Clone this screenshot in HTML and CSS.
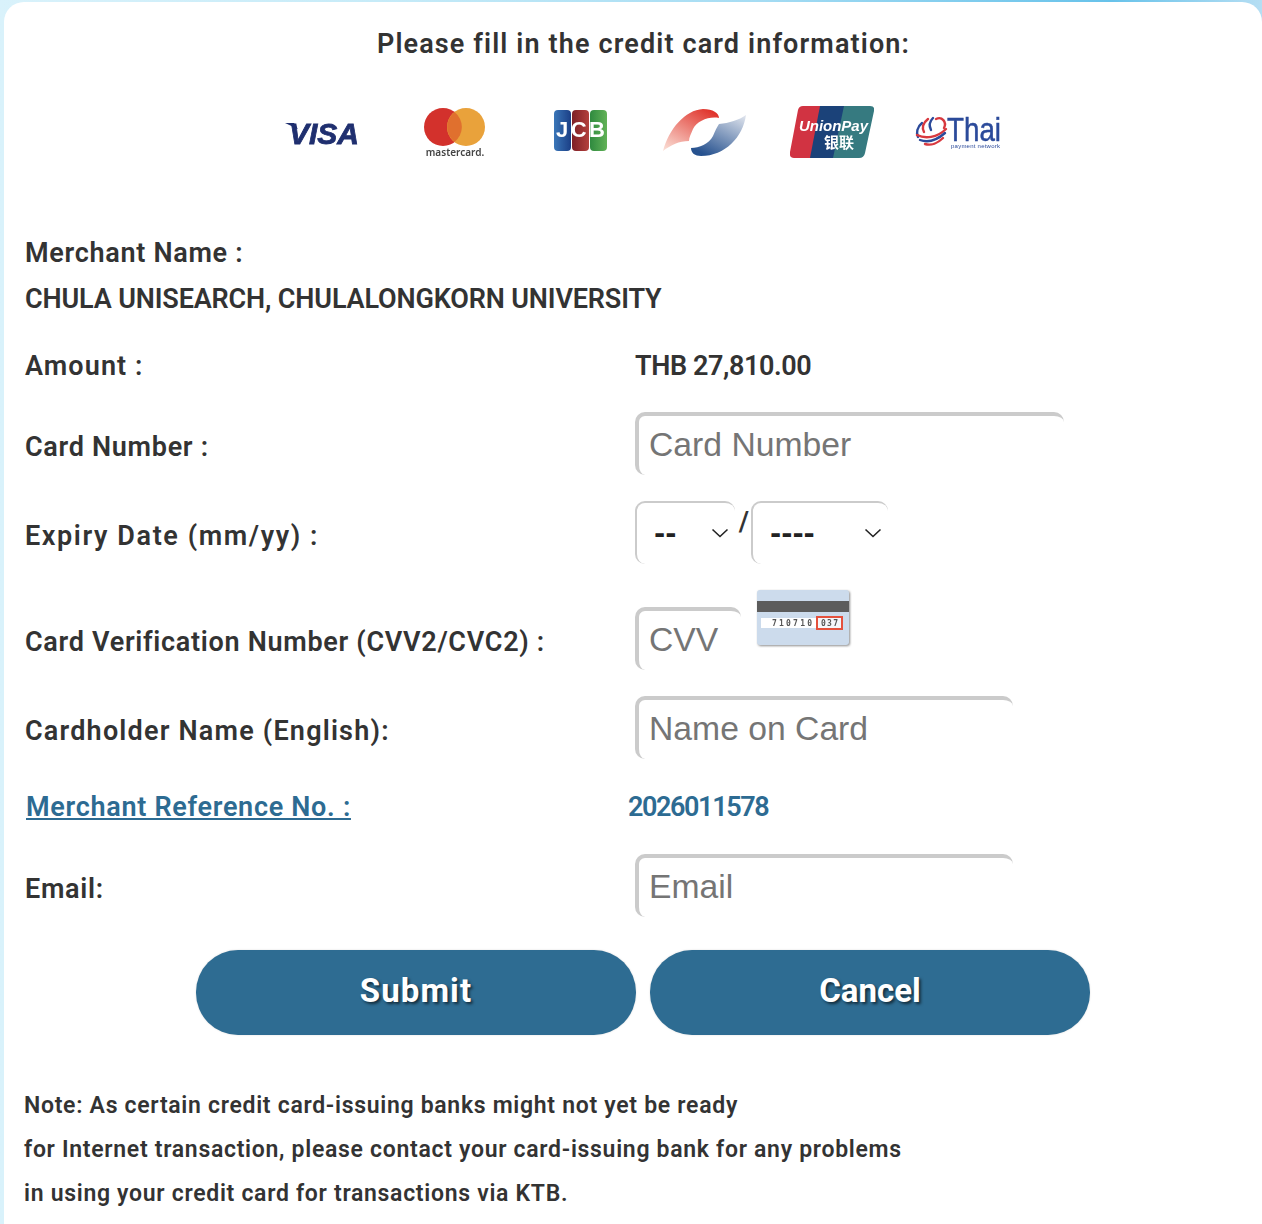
FILE: index.html
```html
<!DOCTYPE html>
<html lang="en">
<head>
    <meta charset="UTF-8">
    <title>Credit Card Payment</title>
    <link rel="stylesheet" href="styles.css">
</head>
<body>
    <main class="card">
        <h1 class="title">Please fill in the credit card information:</h1>

        <div class="logos">
            <svg class="logo" width="84" height="30" viewBox="0 0 84 30">
                <path d="M0 6 H9 L13 12 Z" fill="#1f2f6f"/>
                <text x="4" y="27" textLength="70" lengthAdjust="spacingAndGlyphs" class="visa-text">VISA</text>
            </svg>
            <svg class="logo logo-mc" width="66" height="56" viewBox="0 0 66 56">
                <circle cx="19" cy="22" r="19" fill="#d3312c"/>
                <circle cx="42" cy="22" r="19" fill="#e9a23b"/>
                <path d="M30.5 7 a19 19 0 0 1 0 30 a19 19 0 0 1 0 -30 Z" fill="#e0702e"/>
                <text x="31" y="51" text-anchor="middle" class="mc-text">mastercard.</text>
            </svg>
            <svg class="logo" width="56" height="44" viewBox="0 0 56 44">
                <defs>
                    <linearGradient id="jcbBlue" x1="0" y1="0" x2="1" y2="0">
                        <stop offset="0" stop-color="#3a76b8"/>
                        <stop offset="1" stop-color="#1b3f86"/>
                    </linearGradient>
                    <linearGradient id="jcbRed" x1="0" y1="0" x2="1" y2="0">
                        <stop offset="0" stop-color="#7d1f26"/>
                        <stop offset="1" stop-color="#b4403c"/>
                    </linearGradient>
                    <linearGradient id="jcbGreen" x1="0" y1="0" x2="1" y2="0">
                        <stop offset="0" stop-color="#2f8a3f"/>
                        <stop offset="1" stop-color="#62b257"/>
                    </linearGradient>
                </defs>
                <rect x="1" y="0" width="17" height="41" rx="4" fill="url(#jcbBlue)"/>
                <rect x="19" y="0" width="17" height="41" rx="4" fill="url(#jcbRed)"/>
                <rect x="37" y="0" width="17" height="41" rx="4" fill="url(#jcbGreen)"/>
                <text x="3" y="27" textLength="49" class="jcb-text">JCB</text>
            </svg>
            <svg class="logo" width="84" height="50" viewBox="0 0 84 50">
                <defs>
                    <linearGradient id="redSwoosh" x1="0" y1="1" x2="0.8" y2="0">
                        <stop offset="0" stop-color="#fbe3da"/>
                        <stop offset="1" stop-color="#e0342c"/>
                    </linearGradient>
                    <linearGradient id="blueSwoosh" x1="0.3" y1="1" x2="1" y2="0">
                        <stop offset="0" stop-color="#27528f"/>
                        <stop offset="1" stop-color="#e3e7ef"/>
                    </linearGradient>
                </defs>
                <path d="M0 44 C6 22 22 3 40 2 C50 2 56 6 56 11 C46 9 34 14 30 22 C28 27 26 30 26 34 C16 34 8 38 0 44 Z" fill="url(#redSwoosh)"/>
                <path d="M83 8 C80 30 62 49 38 49 C32 49 28 46 28 41 C36 41 46 37 50 29 C52 24 54 20 56 17 C66 16 76 13 83 8 Z" fill="url(#blueSwoosh)"/>
            </svg>
            <svg class="logo" width="84" height="52" viewBox="0 0 84 52">
                <path d="M11 0 H38 L28 52 H4 Q-1 52 0 46 L8 4 Q9 0 13 0 Z" fill="#d13342"/>
                <path d="M30 0 H62 L52 52 H20 Z" fill="#1b4279"/>
                <path d="M54 0 H80 Q85 0 84 5 L75 47 Q74 52 69 52 H43 Z" fill="#367a80"/>
                <text x="9" y="25" textLength="69" class="up-text">UnionPay</text>
                <text x="34" y="42" class="up-cjk">银联</text>
            </svg>
            <svg class="logo" width="100" height="36" viewBox="0 0 100 36">
                <g fill="none" stroke-width="2.4" stroke-linecap="round">
                    <path d="M7 9 C2 13 1 19 3 23" stroke="#2b4a9a"/>
                    <path d="M13 5 C8 9 7 14 9 18" stroke="#d8393f"/>
                    <path d="M18 4 C14 8 14 12 16 16" stroke="#2b4a9a"/>
                    <path d="M21 5 C27 2 32 8 29 14" stroke="#d8393f"/>
                    <path d="M2 21 C10 25 22 24 31 15" stroke="#d8393f"/>
                    <path d="M5 26 C13 29 22 26 30 19" stroke="#2b4a9a"/>
                    <path d="M10 30 C16 32 23 29 28 24" stroke="#d8393f"/>
                </g>
                <text x="32" y="27" textLength="54" lengthAdjust="spacingAndGlyphs" class="thai-text">Thai</text>
                <text x="36" y="34" textLength="49" class="thai-small">payment network</text>
            </svg>
        </div>

        <div class="merchant">
            <p class="label">Merchant Name :</p>
            <p class="label label-caps">CHULA UNISEARCH, CHULALONGKORN UNIVERSITY</p>
        </div>

        <div class="row row-amount">
            <span class="label">Amount :</span>
            <span class="label value amount-value">THB 27,810.00</span>
        </div>

        <div class="row row-card">
            <label class="label">Card Number :</label>
            <div class="value"><input class="field field-card" type="text" placeholder="Card Number"></div>
        </div>

        <div class="row row-expiry">
            <label class="label">Expiry Date (mm/yy) :</label>
            <div class="value expiry">
                <div class="select-wrap select-month">
                    <select class="field select"><option>--</option></select>
                    <svg class="chevron" width="18" height="10" viewBox="0 0 18 10"><path d="M1.5 1.5 L9 8.5 L16.5 1.5" fill="none" stroke="#222" stroke-width="1.6"/></svg>
                </div>
                <span class="slash">/</span>
                <div class="select-wrap select-year">
                    <select class="field select"><option>----</option></select>
                    <svg class="chevron" width="18" height="10" viewBox="0 0 18 10"><path d="M1.5 1.5 L9 8.5 L16.5 1.5" fill="none" stroke="#222" stroke-width="1.6"/></svg>
                </div>
            </div>
        </div>

        <div class="row row-cvv">
            <label class="label">Card Verification Number (CVV2/CVC2) :</label>
            <div class="value cvv">
                <input class="field field-cvv" type="text" placeholder="CVV">
                <svg class="cvv-card" width="96" height="60" viewBox="0 0 96 60">
                    <rect x="1" y="1" width="92" height="55" rx="3" fill="#ccdbec"/>
                    <rect x="1" y="12" width="92" height="11" fill="#5c5c5c"/>
                    <rect x="5" y="29" width="55" height="10" fill="#fff"/>
                    <rect x="61" y="28" width="25" height="12" fill="#f4f6fa" stroke="#e4503c" stroke-width="2"/>
                    <text x="16" y="37" textLength="40" class="cvv-digits">710710</text>
                    <text x="65" y="37" textLength="17" class="cvv-digits">037</text>
                </svg>
            </div>
        </div>

        <div class="row row-name">
            <label class="label">Cardholder Name (English):</label>
            <div class="value"><input class="field field-wide" type="text" placeholder="Name on Card"></div>
        </div>

        <div class="row row-ref">
            <a class="label ref-link" href="#">Merchant Reference No. :</a>
            <span class="label ref-value">2026011578</span>
        </div>

        <div class="row row-email">
            <label class="label">Email:</label>
            <div class="value"><input class="field field-wide" type="text" placeholder="Email"></div>
        </div>

        <div class="buttons">
            <button class="btn">Submit</button>
            <button class="btn btn-cancel">Cancel</button>
        </div>

        <div class="note">
            <p>Note: As certain credit card-issuing banks might not yet be ready</p>
            <p>for Internet transaction, please contact your card-issuing bank for any problems</p>
            <p>in using your credit card for transactions via KTB.</p>
        </div>
    </main>
</body>
</html>
```

FILE: styles.css
```css
* {
    box-sizing: border-box;
}

html, body {
    margin: 0;
    padding: 0;
}

body {
    height: 1224px;
    overflow: hidden;
    padding: 2px 0 0 4px;
    background: linear-gradient(90deg, #d9f2fb 0%, #c6ebf8 30%, #a5dcf3 60%, #67c2ea 88%, #b5def3 100%);
    font-family: Roboto, "Noto Sans", sans-serif;
    color: #333;
}

.card {
    height: 1222px;
    padding: 0 0 0 21px;
    background-color: #ffffff;
    border-radius: 20px 20px 0 0;
}

.title {
    margin: 0;
    padding-top: 25px;
    height: 101px;
    text-align: center;
    font-size: 27px;
    line-height: 34px;
    font-weight: 600;
    letter-spacing: 1.13px;
}

/* Logos de cartao */
.logos {
    display: flex;
    align-items: center;
    height: 58px;
    margin-left: 260px;
}

.logo {
    display: block;
    flex: none;
    filter: blur(0.5px);
}

.logo:nth-child(1) { margin-right: 55px; }
.logo:nth-child(2) { margin-right: 63px; }
.logo:nth-child(3) { margin-right: 54px; }
.logo:nth-child(4) { margin-right: 43px; }
.logo:nth-child(5) { margin-right: 41px; }

.logo-mc {
    margin-top: 2px;
}

.visa-text {
    font: italic 700 29px "Liberation Sans", sans-serif;
    fill: #1f2f6f;
    stroke: #1f2f6f;
    stroke-width: 0.8;
}

.mc-text {
    font: 600 10px "Noto Sans", sans-serif;
    fill: #444;
}

.jcb-text {
    font: 700 22px "Liberation Sans", sans-serif;
    fill: #fff;
}

.up-text {
    font: italic 700 15px "Liberation Sans", sans-serif;
    fill: #fff;
}

.up-cjk {
    font: 700 15px "Noto Sans CJK SC", sans-serif;
    fill: #fff;
}

.thai-text {
    font: 400 33px "Liberation Sans", sans-serif;
    fill: #2b4a9a;
    stroke: #2b4a9a;
    stroke-width: 0.5;
}

.thai-small {
    font: 400 6px "Liberation Sans", sans-serif;
    fill: #2b4a9a;
}

/* Linhas do formulario */
.label {
    margin: 0;
    font-size: 27px;
    line-height: 34px;
    font-weight: 600;
    letter-spacing: 0.7px;
    color: #333;
}

.label-caps {
    letter-spacing: -0.15px;
}

.amount-value {
    letter-spacing: -0.4px;
}

.merchant {
    display: flex;
    flex-direction: column;
    gap: 12px;
    padding-top: 75px;
}

.row {
    display: grid;
    grid-template-columns: 603px 1fr;
    align-items: center;
}

.row > label {
    padding-top: 6px;
}

.value {
    padding-left: 7px;
}

.row-amount { margin-top: 33px; }
.row-amount > .label:first-child { letter-spacing: 1.1px; }
.row-card { margin-top: 29px; }
.row-expiry { margin-top: 26px; }
.row-expiry > label { letter-spacing: 1.6px; }
.row-cvv { margin-top: 43px; }
.row-name { margin-top: 26px; }
.row-name > label { letter-spacing: 1.2px; }
.row-ref { margin-top: 31px; }
.row-email { margin-top: 30px; }

.field {
    display: block;
    height: 63px;
    border-style: solid;
    border-width: 4px 0 0 4px;
    border-color: #cbcbcb;
    border-radius: 10px;
    background-color: #ffffff;
    font-family: "Liberation Sans", sans-serif;
    font-size: 33.7px;
    padding: 0 0 2px 10px;
    outline: none;
}

.field::placeholder {
    color: #757575;
}

.field-card { width: 429px; }
.field-wide { width: 378px; }
.field-cvv { width: 106px; }

.expiry {
    display: flex;
    align-items: flex-start;
}

.select-wrap {
    position: relative;
}

.select {
    width: 100%;
    border-top-width: 2px;
    border-left-width: 2px;
    appearance: none;
    font-family: "DejaVu Sans", sans-serif;
    font-size: 27px;
    font-weight: 700;
    color: #222;
    padding: 0 0 0 17px;
}

.select-month { width: 100px; }
.select-year { width: 137px; }

.chevron {
    position: absolute;
    top: 27px;
    right: 6px;
}

.slash {
    width: 16px;
    padding-left: 2px;
    text-align: center;
    font-size: 27px;
    line-height: 42px;
    font-weight: 600;
    color: #333;
}

.cvv {
    position: relative;
}

.cvv-card {
    position: absolute;
    top: -18px;
    left: 128px;
    filter: drop-shadow(1px 1px 1px rgba(0, 0, 0, 0.45)) blur(0.4px);
}

.cvv-digits {
    font: 700 8px "DejaVu Sans Mono", monospace;
    fill: #555;
}

.ref-link {
    color: #2d6b92;
    padding-left: 1px;
    text-decoration: underline;
}

.ref-value {
    color: #2d6b92;
    letter-spacing: -1.4px;
}

/* Botoes */
.buttons {
    display: flex;
    gap: 14px;
    margin-top: 33px;
    margin-left: 171px;
}

.btn {
    width: 440px;
    height: 85px;
    padding-bottom: 6px;
    border: none;
    border-radius: 42px;
    background-color: #2e6c92;
    color: #ffffff;
    font-family: Roboto, sans-serif;
    font-size: 33px;
    font-weight: 700;
    letter-spacing: 1.1px;
    text-shadow: 2px 2px 3px rgba(0, 0, 0, 0.6);
    box-shadow: 0 0 2px rgba(0, 0, 0, 0.15);
}

.btn-cancel {
    letter-spacing: 0;
}

/* Nota */
.note {
    margin-top: 49px;
    margin-left: -1px;
}

.note p {
    margin: 0;
    font-size: 23px;
    line-height: 44px;
    font-weight: 600;
    letter-spacing: 0.7px;
    color: #333;
}
```
